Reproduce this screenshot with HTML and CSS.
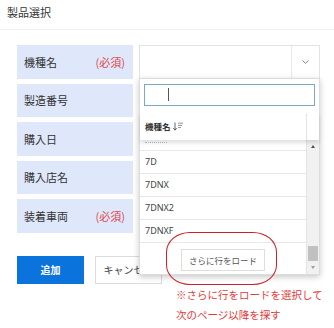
FILE: index.html
```html
<!DOCTYPE html>
<html lang="ja">
<head>
  <meta charset="UTF-8">
  <meta name="viewport" content="width=device-width, initial-scale=1.0">
  <title>製品選択</title>
  <link rel="stylesheet" href="styles.css">
</head>
<body>
  <div class="page">
    <div class="page-title">製品選択</div>

    <div class="form">
      <div class="form-row">
        <div class="label">機種名<span class="required">(必須)</span></div>
        <div class="field select">
          <div class="select-value"></div>
          <div class="select-arrow">
            <svg width="7" height="4" viewBox="0 0 7 4"><path d="M0.5 0.5 L3.5 3.3 L6.5 0.5" fill="none" stroke="#777" stroke-width="0.9"/></svg>
          </div>

          <!-- ドロップダウン -->
          <div class="dropdown">
            <div class="search-wrap">
              <div class="search-input"><span class="caret"></span></div>
            </div>
            <div class="grid-head">
              <div class="head-cell">機種名
                <svg class="sort-icon" width="11" height="9" viewBox="0 0 11 9">
                  <path d="M2 0.5 V8 M0.3 6 L2 8.2 L3.7 6" fill="none" stroke="#555" stroke-width="0.9"/>
                  <path d="M5 1.2 H10 M5 3.4 H9 M5 5.6 H8" fill="none" stroke="#777" stroke-width="0.8"/>
                </svg>
              </div>
              <div class="head-gap"></div>
            </div>
            <div class="grid-body">
              <div class="grid-list">
                <!-- スクロールで上端が隠れた行 -->
                <div class="grid-row cut"><span class="cut-mark"></span></div>
                <div class="grid-row">7D</div>
                <div class="grid-row">7DNX</div>
                <div class="grid-row">7DNX2</div>
                <div class="grid-row">7DNXF</div>
                <div class="grid-foot">
                  <button class="load-more">さらに行をロード</button>
                </div>
              </div>
              <div class="scrollbar">
                <div class="sb-arrow up"></div>
                <div class="sb-track"><div class="sb-thumb"></div></div>
                <div class="sb-arrow down"></div>
              </div>
            </div>
          </div>
        </div>
      </div>
      <div class="form-row">
        <div class="label">製造番号</div>
        <div class="field"></div>
      </div>
      <div class="form-row">
        <div class="label">購入日</div>
        <div class="field"></div>
      </div>
      <div class="form-row">
        <div class="label">購入店名</div>
        <div class="field"></div>
      </div>
      <div class="form-row">
        <div class="label">装着車両<span class="required">(必須)</span></div>
        <div class="field"></div>
      </div>

      <div class="actions">
        <button class="btn btn-primary">追加</button>
        <button class="btn">キャンセル</button>
      </div>
    </div>

    <!-- 注記 -->
    <div class="note-ring"></div>
    <div class="note-text">※さらに行をロードを選択して<br>次のページ以降を探す</div>
  </div>
</body>
</html>
```

FILE: styles.css
```css
body {
  margin: 0;
  background: #fff;
  font-family: "Noto Sans CJK JP", "Noto Sans", sans-serif;
  color: #333;
}

.page {
  position: relative;
  width: 334px;
  height: 328px;
  overflow: hidden;
}

.page-title {
  box-sizing: border-box;
  height: 30px;
  padding: 4px 7px 0;
  font-size: 11px;
  line-height: 16px;
  border-bottom: 1px solid #f0f0f0;
}

.form {
  padding: 15px 14px 0 17px;
  display: flex;
  flex-direction: column;
  gap: 5px;
}

.form-row {
  display: flex;
  gap: 6px;
  height: 33.5px;
}

.label {
  box-sizing: border-box;
  width: 116px;
  padding: 0 8px 0 7px;
  display: flex;
  align-items: center;
  justify-content: space-between;
  background: #dfe8fb;
  font-size: 11px;
}

.required {
  color: #e0464b;
}

.field {
  position: relative;
  box-sizing: border-box;
  width: 181px;
  border: 1px solid #e3e3e3;
  background: #fff;
}

.select {
  display: flex;
}

.select-value {
  flex: 1;
}

.select-arrow {
  width: 27px;
  border-left: 1px solid #e8e8e8;
  display: flex;
  align-items: center;
  justify-content: center;
}

.dropdown {
  position: absolute;
  top: 100%;
  left: -1px;
  z-index: 10;
  box-sizing: border-box;
  width: 181px;
  height: 197px;
  background: #fff;
  border: 1px solid #dcdcdc;
  box-shadow: 0 2px 6px rgba(0, 0, 0, 0.22);
  display: flex;
  flex-direction: column;
}

.search-wrap {
  padding: 5px 4px 0;
}

.search-input {
  box-sizing: border-box;
  height: 22px;
  border: 1px solid #7ea8c8;
  display: flex;
  align-items: center;
}

.caret {
  margin-left: 23px;
  width: 1px;
  height: 13px;
  background: #555;
}

.grid-head {
  margin-top: 7px;
  height: 27px;
  display: flex;
  position: relative;
  z-index: 1;
  box-shadow: 0 3px 4px rgba(0, 0, 0, 0.12);
}

.head-cell {
  flex: 1;
  display: flex;
  align-items: center;
  gap: 2px;
  padding-left: 5px;
  font-size: 8.5px;
  font-weight: bold;
}

.head-gap {
  width: 12px;
  border-left: 1px solid #e4e4e4;
}

.grid-body {
  flex: 1;
  display: flex;
  min-height: 0;
}

.grid-list {
  flex: 1;
  display: flex;
  flex-direction: column;
}

.grid-row {
  height: 22px;
  padding-left: 5px;
  display: flex;
  align-items: center;
  border-bottom: 1px solid #e8e8e8;
  font-family: "Noto Sans", "Noto Sans CJK JP", sans-serif;
  font-size: 9px;
  color: #444;
}

.grid-row.cut {
  height: 10px;
  align-items: flex-start;
}

.cut-mark {
  margin-top: 2px;
  width: 22px;
  height: 1px;
  border-top: 1px dotted #bbb;
}

.grid-foot {
  flex: 1;
  display: flex;
  justify-content: center;
  padding-top: 6px;
}

.load-more {
  box-sizing: border-box;
  width: 84px;
  height: 22px;
  padding: 0;
  background: #fff;
  border: 1px solid #dedede;
  font-family: "Noto Sans CJK JP", sans-serif;
  font-size: 8.5px;
  color: #555;
}

.scrollbar {
  width: 12px;
  background: #f1f1f1;
  border-left: 1px solid #e4e4e4;
  display: flex;
  flex-direction: column;
}

.sb-arrow {
  height: 13px;
  display: flex;
  align-items: center;
  justify-content: center;
}

.sb-arrow::before {
  content: "";
  border-left: 2.5px solid transparent;
  border-right: 2.5px solid transparent;
}

.sb-arrow.up::before {
  border-bottom: 3px solid #505050;
}

.sb-arrow.down::before {
  border-top: 3px solid #a0a0a0;
}

.sb-track {
  flex: 1;
  display: flex;
  flex-direction: column;
  justify-content: flex-end;
  padding: 0 1px;
}

.sb-thumb {
  height: 15px;
  background: #c1c1c1;
}

.actions {
  margin-top: 18px;
  display: flex;
  gap: 11px;
}

.btn {
  box-sizing: border-box;
  width: 67px;
  height: 28px;
  padding: 0;
  background: #fff;
  border: 1px solid #dcdcdc;
  font-family: "Noto Sans CJK JP", sans-serif;
  font-size: 10px;
  color: #444;
}

.btn-primary {
  background: #0b74dc;
  border-color: #0b74dc;
  color: #fff;
  font-weight: bold;
}

.note-ring {
  position: absolute;
  left: 166px;
  top: 232px;
  box-sizing: border-box;
  width: 111px;
  height: 53px;
  border: 1.5px solid #cf1f24;
  border-radius: 24px / 20px;
  z-index: 20;
}

.note-text {
  position: absolute;
  left: 176px;
  top: 285px;
  font-size: 10.5px;
  line-height: 20px;
  color: #e23b3b;
  white-space: nowrap;
}
```
